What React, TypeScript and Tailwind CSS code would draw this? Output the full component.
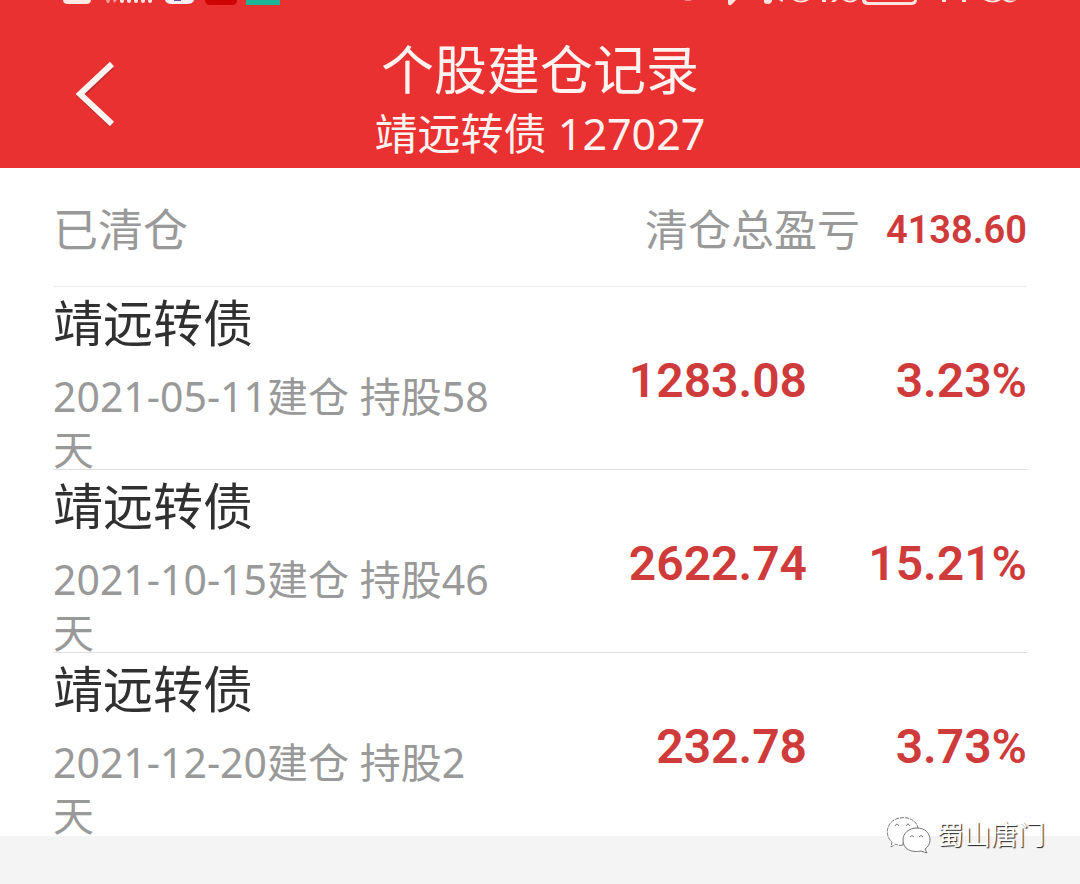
import React from "react";

type Position = {
  name: string;
  opened: string;
  days: number;
  profit: string;
  rate: string;
};

const positions: Position[] = [
  { name: "靖远转债", opened: "2021-05-11", days: 58, profit: "1283.08", rate: "3.23%" },
  { name: "靖远转债", opened: "2021-10-15", days: 46, profit: "2622.74", rate: "15.21%" },
  { name: "靖远转债", opened: "2021-12-20", days: 2, profit: "232.78", rate: "3.73%" },
];

function StatusBar() {
  return (
    <div className="flex h-2 items-end justify-between overflow-hidden pl-[60px] pr-[64px]" aria-hidden="true">
      <svg width="222" height="8" viewBox="0 0 222 8">
        <path d="M3 0h28q0 4-5 4H8q-5 0-5-4z" fill="#ffe9e4" />
        <path d="M46 0h4l-1 3h-2zM53 0h4l-3 3z" fill="#f79a94" />
        <path d="M60 0h4v1q0 2-2 2t-2-2zM67 0h4v1q0 2-2 2t-2-2zM74 0h4v1q0 2-2 2t-2-2zM81 0h4v1q0 2-2 2t-2-2zM88 0h4v1q0 2-2 2t-2-2z" fill="#ffe3df" />
        <path d="M105 0h29q-1 4-7 4h-15q-6 0-7-4z" fill="#fbeef4" />
        <path d="M114 0h7v1h-7z" fill="#68539a" />
        <path d="M145 0h32q0 5-5 5h-22q-5 0-5-5z" fill="#cf0505" />
        <path d="M186 0h34v5h-34z" fill="#1cb595" />
      </svg>
      <svg width="336" height="8" viewBox="0 0 336 8" fill="#ffe3df">
        <path d="M4 0h8q-4 1-8 0zM48 0h8l-5 5q-3 1-3-2z" />
        <path d="M84 0h8v1q-1 3-4 3-5 0-4-4zM99 0h4v1l-1 1z" />
        <path d="M113 0h4q4 1 8 0h4q-8 5-16 0zM142 0h4v2h-4zM153 0h4l-2 2h-4zM163 0h4q3 1 6 0h4q-7 5-14 0z" />
        <path d="M182 0h4q0 2 4 2h40q4 0 4-2h3q0 5-6 5h-43q-6 0-6-5z" />
        <path d="M262 0h4v2h-4zM282 0h4v2h-4zM304 0h5q4 1 7 0h5q-8 5-17 0zM323 0h5q4 1 7 0h1q-6 5-13 0z" />
      </svg>
    </div>
  );
}

function Header() {
  return (
    <header className="bg-[#e93131] text-[#fff3f1]">
      <StatusBar />
      <div className="grid h-[160px] grid-cols-[1fr_auto_1fr] items-center pt-4">
        <button type="button" aria-label="返回" className="ml-[73px] w-12 pb-1">
          <svg width="44" height="72" viewBox="0 0 44 72" fill="none">
            <path d="M39 8 8 38l31 29" stroke="#a72528" strokeWidth="6" opacity=".6" />
            <path d="M39 6 7 36l32 30" stroke="#fff3f1" strokeWidth="6" />
          </svg>
        </button>
        <div className="flex flex-col items-center pt-2">
          <h1 className="text-[53px] leading-[68px]">个股建仓记录</h1>
          <p className="text-[43px] leading-[60px]">靖远转债 127027</p>
        </div>
      </div>
    </header>
  );
}

function PositionRow({ item }: { item: Position }) {
  return (
    <li className="flex h-[183px] items-start border-b border-[#dedede] last:border-b-0">
      <div className="w-[45%]">
        <h2 className="text-[50px] leading-[73px] text-[#303030]">{item.name}</h2>
        <p className="pt-[10px] text-[41px] leading-[53px] text-[#999999]">
          {item.opened}建仓 持股{item.days}天
        </p>
      </div>
      <div className="flex flex-1 pt-16 text-right font-['Roboto','Noto_Sans_CJK_SC',sans-serif] text-[48px] font-semibold leading-[60px] text-[#cf3b3b]">
        <span className="flex-1">{item.profit}</span>
        <span className="w-[220px]">{item.rate}</span>
      </div>
    </li>
  );
}

function Watermark() {
  return (
    <div className="absolute bottom-[29px] right-[35px] flex items-center gap-1 text-[27px] leading-9 text-white [text-shadow:1px_1px_1px_#222222]">
      <svg width="48" height="40" viewBox="0 0 48 40" fill="#ffffff" stroke="#777777" strokeWidth="1">
        <path d="M18 30C15 31 12 30 11 29l-5 3 1-5C0 21 1 10 9 5c9-5 22-2 24 8-8 0-15 7-15 17z" strokeDasharray="4 1" />
        <path d="M32 13c8 0 13 5 13 12 0 4-2 7-5 9l2 4-6-2c-10 2-18-2-18-11 0-7 6-12 14-12z" />
        <path d="M10 11q2-4 4 0M21 11q2-4 4 0M25 22q2-3 4 0M34 22q2-3 4 0" fill="none" />
      </svg>
      <span>蜀山唐门</span>
    </div>
  );
}

export default function App() {
  return (
    <div className="relative min-h-screen bg-[#f4f4f4] font-['Noto_Sans','Noto_Sans_CJK_SC',sans-serif]">
      <Header />
      <main className="bg-white px-[53px]">
        <section className="flex h-[119px] items-center justify-between border-b border-[#eeeeee] pt-[6px] text-[#999999]">
          <h2 className="text-[45px] leading-[60px]">已清仓</h2>
          <p className="flex items-center gap-[26px] text-[43px] leading-[60px]">
            清仓总盈亏
            <strong className="font-['Roboto',sans-serif] text-[38px] font-semibold leading-[60px] text-[#cf3b3b]">4138.60</strong>
          </p>
        </section>
        <ul>
          {positions.map((item) => (
            <PositionRow key={item.opened} item={item} />
          ))}
        </ul>
      </main>
      <Watermark />
    </div>
  );
}
